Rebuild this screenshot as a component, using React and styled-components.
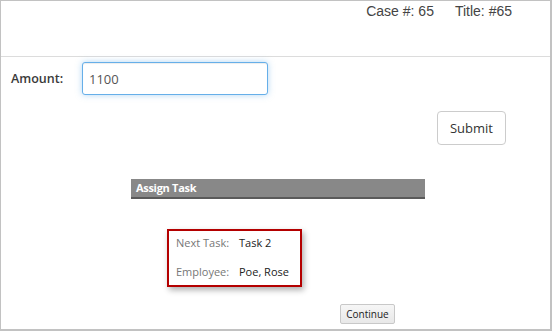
import React from 'react';
import styled, { createGlobalStyle } from 'styled-components';

const GlobalStyle = createGlobalStyle`
  html, body {
    margin: 0;
    padding: 0;
    background: #fff;
  }
  * {
    box-sizing: border-box;
  }
`;

const Frame = styled.div`
  width: 552px;
  height: 331px;
  border: 1px solid #c2c2c2;
  border-right-width: 2px;
  border-bottom-width: 2px;
  font-family: "Open Sans", "Liberation Sans", sans-serif;
  color: #333;
  overflow: hidden;
`;

const Header = styled.div`
  height: 56px;
  border-bottom: 1px solid #dcdcdc;
  display: flex;
  justify-content: flex-end;
  gap: 21px;
  padding: 1px 38px 0 0;
  font-family: "Liberation Sans", Arial, sans-serif;
  font-size: 14px;
  color: #444;
  line-height: 18px;
`;

const FieldRow = styled.div`
  display: flex;
  align-items: center;
  margin-top: 5px;
  padding-left: 10px;
`;

const Label = styled.label`
  width: 71px;
  font-size: 12.5px;
  font-weight: 600;
  color: #3a3a3a;
`;

const Input = styled.input`
  width: 186px;
  height: 33px;
  padding: 0 6px;
  border: 1px solid #66afe9;
  border-radius: 3px;
  outline: none;
  font-family: "Open Sans", sans-serif;
  font-size: 13px;
  color: #555;
  box-shadow: inset 0 1px 1px rgba(0, 0, 0, 0.075), 0 0 6px rgba(102, 175, 233, 0.5);
`;

const Actions = styled.div`
  display: flex;
  justify-content: flex-end;
  margin-top: 16px;
  padding-right: 44px;
`;

const Button = styled.button`
  width: 69px;
  height: 34px;
  background: #fff;
  border: 1px solid #ccc;
  border-radius: 4px;
  font-family: "Open Sans", sans-serif;
  font-size: 13px;
  color: #333;
  padding: 0;
`;

const Panel = styled.div`
  margin: 34px 0 0 130px;
  width: 294px;
`;

const PanelTitle = styled.div`
  height: 20px;
  background: #888;
  border-bottom: 2px solid #5a5a5a;
  color: #fff;
  font-size: 11px;
  font-weight: 700;
  letter-spacing: -0.3px;
  line-height: 18px;
  padding-left: 5px;
`;

const Details = styled.div`
  margin: 30px 0 0 36px;
  width: 135px;
  height: 58px;
  border: 2px solid #b40000;
  box-shadow: 2px 3px 6px rgba(0, 0, 0, 0.32);
  padding: 0 0 0 7px;
  display: grid;
  grid-template-columns: 63px auto;
  grid-auto-rows: 24px;
  row-gap: 5px;
  align-items: center;
  font-size: 11px;
  line-height: 14px;
`;

const Term = styled.span`
  color: #777;
`;

const Value = styled.span`
  color: #222;
`;

const ContinueButton = styled.button`
  display: block;
  margin: 17px 0 0 209px;
  width: 55px;
  height: 20px;
  padding: 0;
  background: linear-gradient(#f6f6f6, #e8e8e8);
  border: 1px solid #c8c8c8;
  border-radius: 2px;
  font-family: "Open Sans", sans-serif;
  font-size: 10px;
  color: #222;
`;

export default function App() {
  return (
    <>
      <GlobalStyle />
      <Frame>
        <Header>
          <span>Case #: 65</span>
          <span>Title: #65</span>
        </Header>
        <FieldRow>
          <Label>Amount:</Label>
          <Input defaultValue="1100" />
        </FieldRow>
        <Actions>
          <Button>Submit</Button>
        </Actions>
        <Panel>
          <PanelTitle>Assign Task</PanelTitle>
          <Details>
            <Term>Next Task:</Term>
            <Value>Task 2</Value>
            <Term>Employee:</Term>
            <Value>Poe, Rose</Value>
          </Details>
          <ContinueButton>Continue</ContinueButton>
        </Panel>
      </Frame>
    </>
  );
}
